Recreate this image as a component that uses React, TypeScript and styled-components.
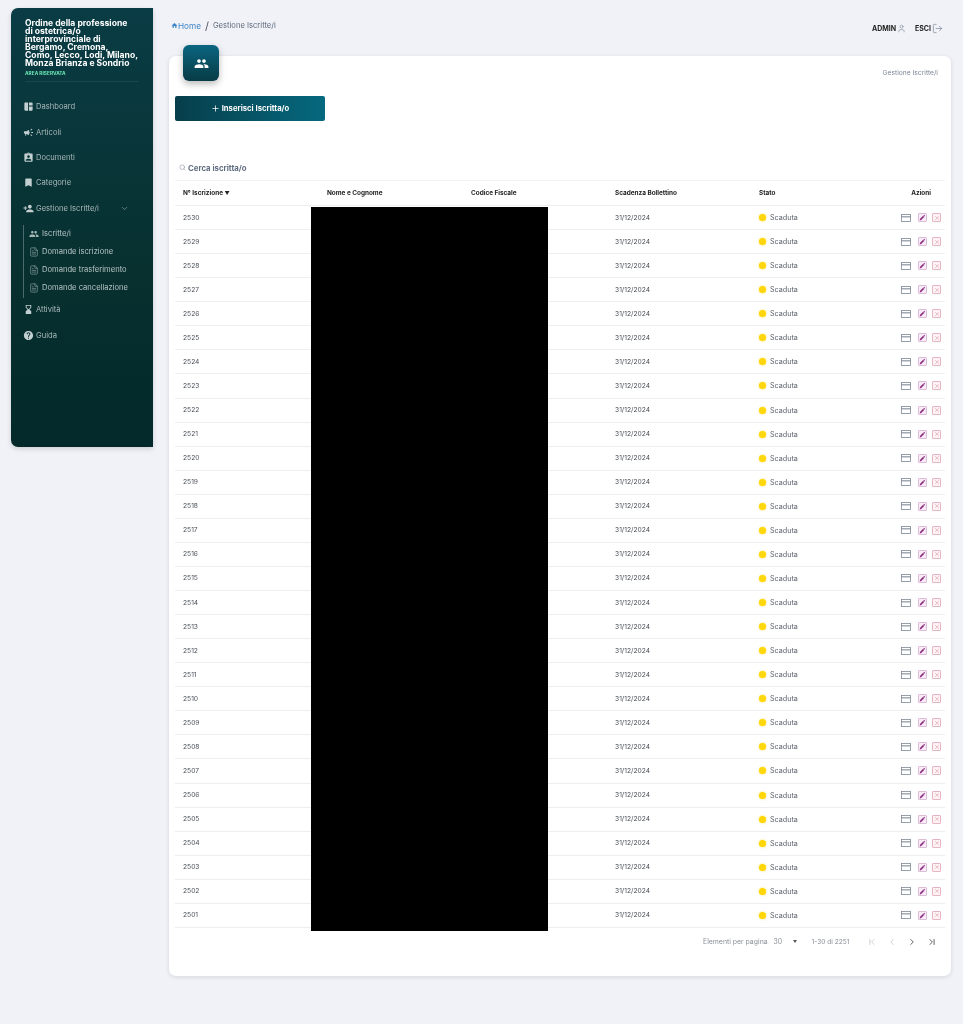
import React from "react";
import styled, { createGlobalStyle } from "styled-components";
import { MdSpaceDashboard, MdCampaign, MdAssignmentInd, MdBookmark, MdPeople, MdHourglassBottom, MdHelp, MdHome, MdPersonAdd, MdEdit } from "react-icons/md";
import { ChevronDown, FileText, Search, Plus, User, LogOut, ChevronFirst, ChevronLast, ChevronLeft, ChevronRight, X } from "lucide-react";

const Global = createGlobalStyle`
  html, body { margin: 0; padding: 0; background: #f0f2f7; }
  body { font-family: Inter, "Liberation Sans", sans-serif; color: #333; }
  * { box-sizing: border-box; }
`;

const Page = styled.div`
  display: flex;
  align-items: flex-start;
  gap: 16px;
  width: 963px;
  height: 1024px;
  padding: 8px 12px 0 11px;
  overflow: hidden;
  will-change: transform;
`;

const Sidebar = styled.aside`
  flex: 0 0 142px;
  width: 142px;
  min-width: 0;
  height: 439px;
  padding: 11px 14px 0;
  border-radius: 7px 0 0 7px;
  background: linear-gradient(180deg, #0a3c45 0%, #07302f 60%, #03292a 100%);
  box-shadow: 0 2px 5px rgba(0, 0, 0, 0.15);
`;

const Brand = styled.div`
  height: 63px;
  border-bottom: 1px solid rgba(255, 255, 255, 0.07);
`;

const BrandTitle = styled.div`
  font-size: 8.6px;
  line-height: 8.1px;
  font-weight: 700;
  color: #fff;
  white-space: nowrap;
`;

const BrandTag = styled.div`
  margin-top: 2px;
  font-size: 4.8px;
  line-height: 6px;
  font-weight: 700;
  color: #6be8b4;
`;

const Nav = styled.nav`
  display: flex;
  flex-direction: column;
  margin: 12px -2px 0 -2px;
`;

const NavItem = styled.div`
  display: flex;
  align-items: center;
  gap: 2px;
  height: 25.4px;
  font-size: 7.6px;
  color: #a9b8b9;
  white-space: nowrap;
  svg { flex: none; color: #c3cfd0; }
`;

const NavChevron = styled.span`
  display: flex;
  margin-left: auto;
  margin-right: 12px;
  svg { color: #7f9698; }
`;

const SubNav = styled.div`
  display: flex;
  flex-direction: column;
  height: 73px;
  margin-top: 4px;
  padding: 0 0 0 5px;
  border-left: 1px solid #4b6b6c;
`;

const SubItem = styled.div`
  display: flex;
  align-items: center;
  gap: 3px;
  height: 18px;
  font-size: 7.6px;
  color: #b7c4c5;
  white-space: nowrap;
  svg { flex: none; color: #a5b6b7; }
`;

const AfterSub = styled.div`
  display: flex;
  flex-direction: column;
  margin-top: -1px;
`;

const Main = styled.main`
  flex: 1;
  min-width: 0;
`;

const TopBar = styled.header`
  display: flex;
  align-items: flex-start;
  justify-content: space-between;
  height: 48px;
  padding: 12px 8px 0 2px;
`;

const Crumbs = styled.div`
  display: flex;
  align-items: center;
  height: 11px;
  font-size: 7.6px;
  color: #5d6b7c;
  svg { color: #3f86c9; }
`;

const CrumbLink = styled.span`
  font-size: 8.2px;
  color: #3f86c9;
`;

const CrumbSep = styled.span`
  margin: 0 4px;
  font-size: 11px;
  color: #556;
`;

const UserBox = styled.div`
  display: flex;
  align-items: center;
  height: 14px;
  margin-top: 1px;
  font-size: 7px;
  font-weight: 700;
  color: #222;
  svg { color: #5b6b80; }
`;

const UserLabel = styled.span<{ $gap?: number }>`
  margin-left: ${(p) => p.$gap ?? 0}px;
  margin-right: 1px;
`;

const Card = styled.section`
  position: relative;
  height: 920px;
  padding: 40px 6px 0;
  background: #fff;
  border-radius: 7px;
  box-shadow: 0 1px 4px rgba(40, 50, 70, 0.14);
`;

const Tile = styled.div`
  position: absolute;
  top: -11px;
  left: 14px;
  display: flex;
  align-items: center;
  justify-content: center;
  width: 36px;
  height: 36px;
  border-radius: 6px;
  color: #fff;
  background: linear-gradient(180deg, #0a6580 0%, #073b45 100%);
  box-shadow: 0 3px 7px rgba(0, 0, 0, 0.28);
`;

const CardCaption = styled.div`
  position: absolute;
  top: 13px;
  right: 13px;
  font-size: 6.7px;
  color: #7c8696;
`;

const AddButton = styled.button`
  display: flex;
  align-items: center;
  justify-content: center;
  gap: 2px;
  width: 150px;
  height: 25px;
  padding: 0;
  border: 0;
  border-radius: 2px;
  font-family: inherit;
  font-size: 7.7px;
  font-weight: 700;
  color: #fff;
  background: linear-gradient(90deg, #073e4a 0%, #05697f 100%);
`;

const SearchRow = styled.div`
  display: flex;
  align-items: center;
  gap: 2px;
  height: 15px;
  margin: 39px 0 0 4px;
  font-size: 7.8px;
  font-weight: 700;
  color: #5f6c80;
  svg { color: #8b95a3; }
`;

const Table = styled.div`
  position: relative;
  margin-top: 5px;
  width: 770px;
  border-top: 1px solid #f1f2f5;
`;

const Row = styled.div<{ $head?: boolean }>`
  display: grid;
  grid-template-columns: repeat(4, 144px) 142px 1fr;
  align-items: center;
  height: ${(p) => (p.$head ? "25px" : "24.07px")};
  padding: 0 4px 0 8px;
  border-bottom: 1px solid #eceef2;
  font-size: ${(p) => (p.$head ? "6.4px" : "6.7px")};
  font-weight: ${(p) => (p.$head ? 700 : 400)};
  color: ${(p) => (p.$head ? "#222" : "#4a4f58")};
  white-space: nowrap;
`;

const SortMark = styled.span`
  font-size: 5px;
`;

const ActionsHead = styled.div`
  text-align: right;
  padding-right: 10px;
`;

const Status = styled.div`
  display: flex;
  align-items: center;
  gap: 4px;
  font-size: 7.2px;
  color: #5b616b;
`;

const Dot = styled.span`
  width: 7px;
  height: 7px;
  border-radius: 50%;
  background: #ffd60a;
  box-shadow: 0 0 2px rgba(255, 214, 10, 0.8);
`;

const Actions = styled.div`
  display: flex;
  align-items: center;
  justify-content: flex-end;
`;

const CardIcon = styled.svg`
  flex: none;
  width: 10px;
  height: 8px;
  margin-right: 7px;
  color: #7a8894;
`;

const EditBtn = styled.span`
  display: flex;
  align-items: center;
  justify-content: center;
  flex: none;
  width: 9px;
  height: 9px;
  margin-right: 5px;
  border: 1px solid #dcbcd8;
  border-radius: 1px;
  background: #f8ecf6;
  color: #8e2f83;
`;

const DelBtn = styled.span`
  display: flex;
  align-items: center;
  justify-content: center;
  flex: none;
  width: 9px;
  height: 9px;
  border: 1px solid #e6b4c3;
  border-radius: 1px;
  background: #fdf3f5;
  color: #d2708a;
`;

const Redaction = styled.div`
  position: absolute;
  top: 26px;
  left: 136px;
  width: 237px;
  height: 724px;
  background: #000;
`;

const Pager = styled.div`
  display: flex;
  align-items: center;
  height: 14px;
  margin: 7px 0 0 528px;
  font-size: 6.9px;
  color: #8a8f98;
  white-space: nowrap;
`;

const PageSize = styled.span`
  margin-left: 6px;
  width: 19px;
`;

const Caret = styled.span`
  width: 0;
  height: 0;
  border-left: 2.5px solid transparent;
  border-right: 2.5px solid transparent;
  border-top: 3px solid #555;
`;

const Range = styled.span`
  margin: 0 12px 0 15px;
  font-size: 6.6px;
`;

const PageBtn = styled.span<{ $off?: boolean }>`
  display: flex;
  justify-content: center;
  width: 20px;
  color: ${(p) => (p.$off ? "#c2c6cc" : "#444")};
`;

const rows = Array.from({ length: 30 }, (_, i) => 2530 - i);
const subs = ["Domande iscrizione", "Domande trasferimento", "Domande cancellazione"];

export default function App() {
  return (
    <>
      <Global />
      <Page>
        <Sidebar>
          <Brand>
            <BrandTitle>
              Ordine della professione
              <br />
              di ostetrica/o
              <br />
              interprovinciale di
              <br />
              Bergamo, Cremona,
              <br />
              Como, Lecco, Lodi, Milano,
              <br />
              Monza Brianza e Sondrio
            </BrandTitle>
            <BrandTag>AREA RISERVATA</BrandTag>
          </Brand>
          <Nav>
            <NavItem><MdSpaceDashboard size={11} />Dashboard</NavItem>
            <NavItem><MdCampaign size={11} />Articoli</NavItem>
            <NavItem><MdAssignmentInd size={11} />Documenti</NavItem>
            <NavItem><MdBookmark size={11} />Categorie</NavItem>
            <NavItem>
              <MdPersonAdd size={11} />Gestione Iscritte/i
              <NavChevron><ChevronDown size={9} /></NavChevron>
            </NavItem>
            <SubNav>
              <SubItem><MdPeople size={10} />Iscritte/i</SubItem>
              {subs.map((s) => (
                <SubItem key={s}><FileText size={10} strokeWidth={1.3} />{s}</SubItem>
              ))}
            </SubNav>
            <AfterSub>
              <NavItem><MdHourglassBottom size={11} />Attività</NavItem>
              <NavItem><MdHelp size={11} />Guida</NavItem>
            </AfterSub>
          </Nav>
        </Sidebar>
        <Main>
          <TopBar>
            <Crumbs>
              <MdHome size={7} />
              <CrumbLink>Home</CrumbLink>
              <CrumbSep>/</CrumbSep>
              Gestione Iscritte/i
            </Crumbs>
            <UserBox>
              <UserLabel>ADMIN</UserLabel>
              <User size={9} strokeWidth={1.2} />
              <UserLabel $gap={9}>ESCI</UserLabel>
              <LogOut size={11} strokeWidth={1.2} />
            </UserBox>
          </TopBar>
          <Card>
            <Tile><MdPeople size={15} /></Tile>
            <CardCaption>Gestione Iscritte/i</CardCaption>
            <AddButton><Plus size={9} />Inserisci Iscritta/o</AddButton>
            <SearchRow><Search size={7} />Cerca iscritta/o</SearchRow>
            <Table>
              <Row $head>
                <div>N° Iscrizione <SortMark>▼</SortMark></div>
                <div>Nome e Cognome</div>
                <div>Codice Fiscale</div>
                <div>Scadenza Bollettino</div>
                <div>Stato</div>
                <ActionsHead>Azioni</ActionsHead>
              </Row>
              {rows.map((n) => (
                <Row key={n}>
                  <div>{n}</div>
                  <div />
                  <div />
                  <div>31/12/2024</div>
                  <Status><Dot />Scaduta</Status>
                  <Actions>
                    <CardIcon viewBox="0 0 10 8">
                      <rect x="0.5" y="0.5" width="9" height="7" fill="none" stroke="currentColor" strokeWidth="0.8" />
                      <rect x="0.5" y="2" width="9" height="1.5" fill="currentColor" fillOpacity="0.7" />
                    </CardIcon>
                    <EditBtn><MdEdit size={7} /></EditBtn>
                    <DelBtn><X size={6} strokeWidth={1.6} /></DelBtn>
                  </Actions>
                </Row>
              ))}
              <Redaction />
            </Table>
            <Pager>
              Elementi per pagina
              <PageSize>30</PageSize>
              <Caret />
              <Range>1-30 di 2251</Range>
              <PageBtn $off><ChevronFirst size={10} /></PageBtn>
              <PageBtn $off><ChevronLeft size={10} /></PageBtn>
              <PageBtn><ChevronRight size={10} /></PageBtn>
              <PageBtn><ChevronLast size={10} /></PageBtn>
            </Pager>
          </Card>
        </Main>
      </Page>
    </>
  );
}
